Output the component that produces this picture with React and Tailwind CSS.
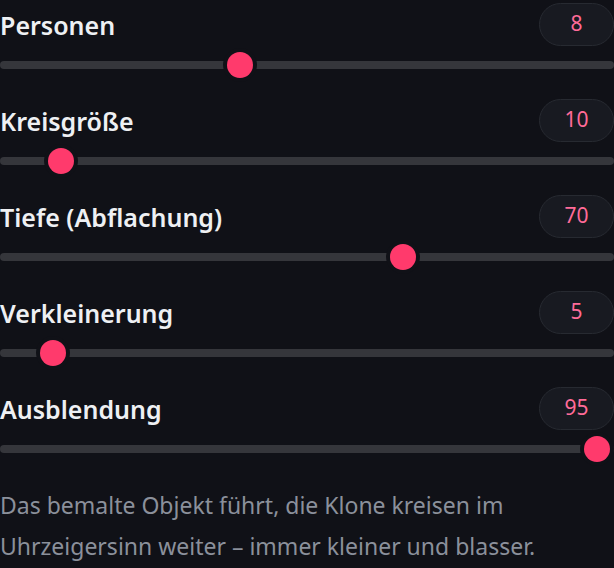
// Slider panel - clone settings
const sliders = [
  { label: 'Personen', value: 8, pct: 0.386 },
  { label: 'Kreisgröße', value: 10, pct: 0.082 },
  { label: 'Tiefe (Abflachung)', value: 70, pct: 0.663 },
  { label: 'Verkleinerung', value: 5, pct: 0.068 },
  { label: 'Ausblendung', value: 95, pct: 0.993 },
]

function SliderRow({ label, value, pct }) {
  return (
    <div className="flex flex-col pb-[21px]">
      {/* label + value pill */}
      <div className="flex h-[42px] items-center justify-between">
        <span className="pt-[3px] text-[25px] font-semibold text-[#eef0f3]">{label}</span>
        <span className="flex h-[43px] w-[75px] items-center justify-center rounded-full border-[1.5px] border-[#272a31] bg-[#181a21] text-[21px] text-[#ff6b98]">
          {value}
        </span>
      </div>
      {/* track */}
      <div className="relative mt-[7px] h-[26px]">
        <div className="absolute left-0 right-0 top-[9px] h-[8px] rounded-full bg-[#35363b]" />
        <div
          className="absolute top-0 h-[26px] w-[26px] rounded-full bg-[#ff3a6c] shadow-[0_0_0_4px_#101117]"
          style={{ left: `calc(${pct} * (100% - 26px))` }}
        />
      </div>
    </div>
  )
}

export default function App() {
  return (
    <div className="h-[568px] w-[614px] overflow-hidden bg-[#101117] pt-[3px] font-['Noto_Sans',sans-serif]">
      {sliders.map((s) => (
        <SliderRow key={s.label} {...s} />
      ))}
      <p className="mt-[2px] text-[23px] leading-[41px] text-[#8b909b]">
        Das bemalte Objekt führt, die Klone kreisen im Uhrzeigersinn weiter – immer kleiner und blasser.
      </p>
    </div>
  )
}
